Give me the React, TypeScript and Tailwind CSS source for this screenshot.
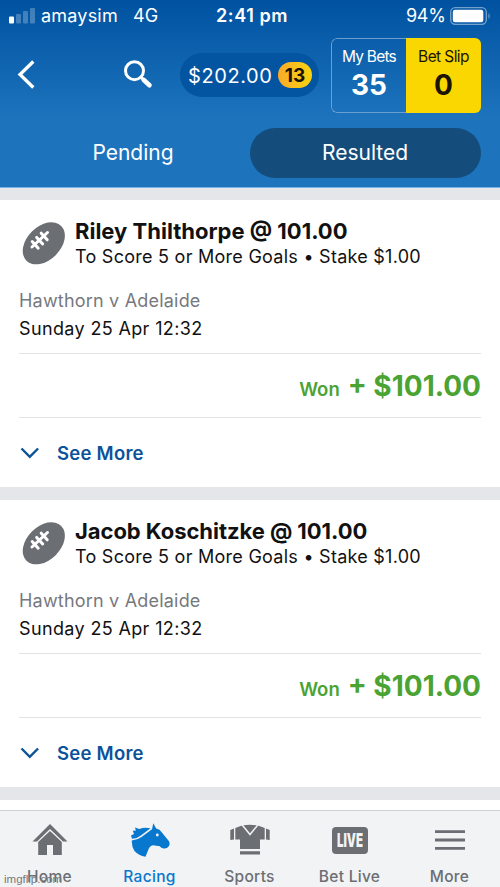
import type { ReactNode } from 'react'

const bets = [
  { id: 1, player: 'Riley Thilthorpe', spacing: 'tracking-[0px]' },
  { id: 2, player: 'Jacob Koschitzke', spacing: 'tracking-[-0.05px]' },
]

function StatusBar() {
  return (
    <div className="flex h-8 items-center text-[18px] leading-8">
      <svg className="ml-[9px]" width="27" height="16" viewBox="0 0 27 16" fill="#fff">
        <rect x="0" y="8.5" width="5" height="7" rx="1" />
        <g fillOpacity=".25">
          <rect x="7" y="6" width="5" height="9.5" rx="1" />
          <rect x="14" y="3" width="5" height="12.5" rx="1" />
          <rect x="21" y="0" width="5" height="15.5" rx="1" />
        </g>
      </svg>
      <span className="ml-[5px] w-[92px] tracking-[0.2px]">amaysim</span>
      <span className="w-[83px]">4G</span>
      <span className="w-[190px] font-semibold tracking-[0.6px]">2:41 pm</span>
      <span className="w-[44px] tracking-[-0.3px]">94%</span>
      <svg width="42" height="18" viewBox="0 0 42 18">
        <rect x=".7" y=".7" width="35.6" height="16.6" rx="4.5" fill="none" stroke="#fff" strokeOpacity=".45" strokeWidth="1.3" />
        <rect x="2.8" y="2.7" width="30.5" height="12.6" rx="2.2" fill="#fff" />
        <path d="M38.5 6Q41 9 38.5 12Z" fill="#fff" fillOpacity=".45" />
      </svg>
    </div>
  )
}

function Header() {
  return (
    <header className="h-[188px] border-b border-[#79b3e8] bg-gradient-to-b from-[#0052a0] to-[#1d74bd] to-[64%] text-white">
      <StatusBar />
      <div className="flex h-[86px] items-center">
        <svg className="ml-[17px]" width="19" height="30" viewBox="0 0 19 30" fill="none" stroke="#fff" strokeWidth="3.3">
          <path d="M16.3 1.5 3 14.5l13.3 13" />
        </svg>
        <svg className="ml-[87px]" width="30" height="30" viewBox="0 0 30 30" fill="none" stroke="#fff">
          <circle cx="11.5" cy="10.7" r="9" strokeWidth="3" />
          <path d="m18 17.2 3 3" strokeWidth="3" />
          <path d="m20.8 20 5.7 5.2" strokeWidth="4.6" strokeLinecap="round" />
        </svg>
        <div className="ml-[27px] flex h-11 w-[139px] items-center rounded-full bg-[#0354a1] pl-2 text-[20px]">
          <span className="w-[90px] pt-px tracking-[0.6px]">$202.00</span>
          <span className="flex h-[26px] w-[34px] items-center justify-center rounded-full bg-gradient-to-r from-[#fbaa27] to-[#f9d40b] pt-0.5 text-[19px] font-bold text-[#1a1400]">
            13
          </span>
        </div>
        <div className="ml-3 flex h-[75px] w-[150px] overflow-hidden rounded-md">
          <div className="flex w-[75px] flex-col items-center rounded-l-md border-[1.5px] border-r-0 border-[#6b9fd2] pt-2">
            <span className="text-[15.5px] leading-5 tracking-[-0.8px]">My Bets</span>
            <span className="mt-0.5 text-[28px] leading-8 font-bold">35</span>
          </div>
          <div className="flex w-[75px] flex-col items-center bg-[#fad700] pt-[9px] text-[#1a1400]">
            <span className="text-[15.5px] leading-5 tracking-[-0.6px]">Bet Slip</span>
            <span className="mt-0.5 text-[28px] leading-8 font-bold">0</span>
          </div>
        </div>
      </div>
      <div className="mx-[19px] mt-[10px] flex h-[50px] items-center text-[21px]">
        <span className="w-[231px] pr-[3px] text-center">Pending</span>
        <span className="flex h-[50px] w-[231px] items-center justify-center rounded-full bg-[#144d7c] pr-px">
          Resulted
        </span>
      </div>
    </header>
  )
}

function Football() {
  return (
    <svg width="44" height="44" viewBox="0 0 44 44">
      <ellipse cx="21.8" cy="22.3" rx="24.6" ry="16.8" transform="rotate(-45 21.8 22.3)" fill="#6b6e72" />
      <g stroke="#fff" strokeWidth="3" strokeLinecap="round">
        <path d="M10 26 25.5 11.5" />
        <path d="m10.2 20.6 6 6.6M14.7 16.4l6 6.6M19.2 12.2l6 6.6" />
      </g>
    </svg>
  )
}

function BetCard({ player, spacing }: { player: string; spacing: string }) {
  return (
    <section className="h-[287px] shrink-0 bg-white px-[19px]">
      <div className="flex h-[72px] pt-[19px]">
        <div className="ml-[3px] pt-0.5">
          <Football />
        </div>
        <div className="ml-[9px] whitespace-nowrap">
          <h2 className={`text-[22px] leading-6 font-bold ${spacing}`}>{player} @ 101.00</h2>
          <p className="text-[18px] leading-7 tracking-[0.26px]">To Score 5 or More Goals • Stake $1.00</p>
        </div>
      </div>
      <div className="mt-[15px] text-[18px] leading-7">
        <p className="tracking-[0.2px] text-[#76797e]">Hawthorn v Adelaide</p>
        <p className="tracking-[0.36px]">Sunday 25 Apr 12:32</p>
      </div>
      <div className="mt-[10px] flex h-[65px] items-baseline justify-end border-y border-[#e2e3e5] text-[#4ba333]">
        <span className="mr-2 text-[18.5px] font-semibold">Won</span>
        <span className="text-[28px] leading-[64px] font-bold">+ $101.00</span>
      </div>
      <div className="flex h-[70px] items-center text-[#0b529b]">
        <svg width="22" height="14" viewBox="0 0 22 14" fill="none" stroke="currentColor" strokeWidth="2.4">
          <path d="m2.5 2.5 8.3 8.3 8.3-8.3" />
        </svg>
        <span className="ml-4 pt-0.5 text-[18.5px] font-semibold tracking-[0.25px]">See More</span>
      </div>
    </section>
  )
}

function HomeIcon() {
  return (
    <svg width="36" height="32" viewBox="0 0 36 32" fill="currentColor">
      <path d="M18 0 35.5 17.5H31L18 5 5 17.5H.5Z" />
      <path d="M18 7 29.8 18V31H21V21H15V31H6.2V18Z" />
    </svg>
  )
}

function HorseIcon() {
  return (
    <svg width="40" height="34" viewBox="0 0 40 34" fill="currentColor">
      <path d="M23.3.3 26.2 5.5Q30 6 31.5 9L39 18.2Q40.300 21 38.800 23.200 37 26 33.500 25.500 31 25 29.800 23.200L23 22.300Q19.500 23 18.200 27L15.500 33.800Q8.500 32.500 4.500 28 1.500 23.500 1.800 17.500 7.500 17 11.500 14L22 6.300Z" />
      <path d="M20.500 5.300Q14 4 9.500 6L4.800 4.500 6 7.500 2.800 7.800 4 11 1 12.500 2 15.700Q7 15.800 10.500 12.800Z" />
      <circle cx="27.3" cy="12" r="1.4" fill="#f2f3f5" />
    </svg>
  )
}

function ShirtIcon() {
  return (
    <svg width="40" height="32" viewBox="0 0 40 32" fill="currentColor">
      <path d="M5.3 4 12 1.5Q20 0 28 1.5L34.7 4V15.5H30V25H10V15.5H5.3Z" />
      <path d="M.3 6 4 4.6V15.5L.3 16ZM39.7 6 36 4.6V15.5L39.7 16ZM10 27.2H30V30.5H10Z" />
      <path d="M12 .7 20 10.5 28 .7" fill="none" stroke="#f2f3f5" strokeWidth="1.5" />
    </svg>
  )
}

function LiveIcon() {
  return (
    <span className="flex h-[27px] w-9 items-center justify-center rounded bg-[#6b6e72] text-[18.5px] leading-none font-black text-[#f2f3f5]">
      <span className="scale-x-[0.62]">LIVE</span>
    </span>
  )
}

function NavItem({ label, active, children }: { label: string; active?: boolean; children: ReactNode }) {
  return (
    <div className={`flex w-[100px] flex-col items-center pr-px ${active ? 'text-[#0878ce]' : 'text-[#6b6e72]'}`}>
      <div className="flex h-[58px] items-center pl-px">{children}</div>
      <span className="text-[15.5px] leading-4 font-medium tracking-[0.3px]">{label}</span>
    </div>
  )
}

export default function App() {
  return (
    <div className="relative flex h-[887px] w-[500px] flex-col overflow-hidden bg-[#e4e6ea] font-['Inter','Liberation_Sans',sans-serif] text-[#111]">
      <Header />
      <main className="mt-3 flex h-[610px] flex-col gap-[13px]">
        {bets.map((bet) => (
          <BetCard key={bet.id} player={bet.player} spacing={bet.spacing} />
        ))}
        <div className="h-[10px] shrink-0 bg-white" />
      </main>
      <nav className="flex h-[77px] border-t border-[#cfd0d1] bg-[#f2f3f5]">
        <NavItem label="Home"><HomeIcon /></NavItem>
        <NavItem label="Racing" active><HorseIcon /></NavItem>
        <NavItem label="Sports"><ShirtIcon /></NavItem>
        <NavItem label="Bet Live"><LiveIcon /></NavItem>
        <NavItem label="More">
          <svg width="30" height="22" viewBox="0 0 30 22" stroke="currentColor" strokeWidth="2.8">
            <path d="M0 2.7h30M0 11h30M0 19.3h30" />
          </svg>
        </NavItem>
      </nav>
      <span className="absolute bottom-0 left-1 font-['Liberation_Sans',sans-serif] text-[11.5px] leading-4 text-[#77797c]">
        imgflip.com
      </span>
    </div>
  )
}
